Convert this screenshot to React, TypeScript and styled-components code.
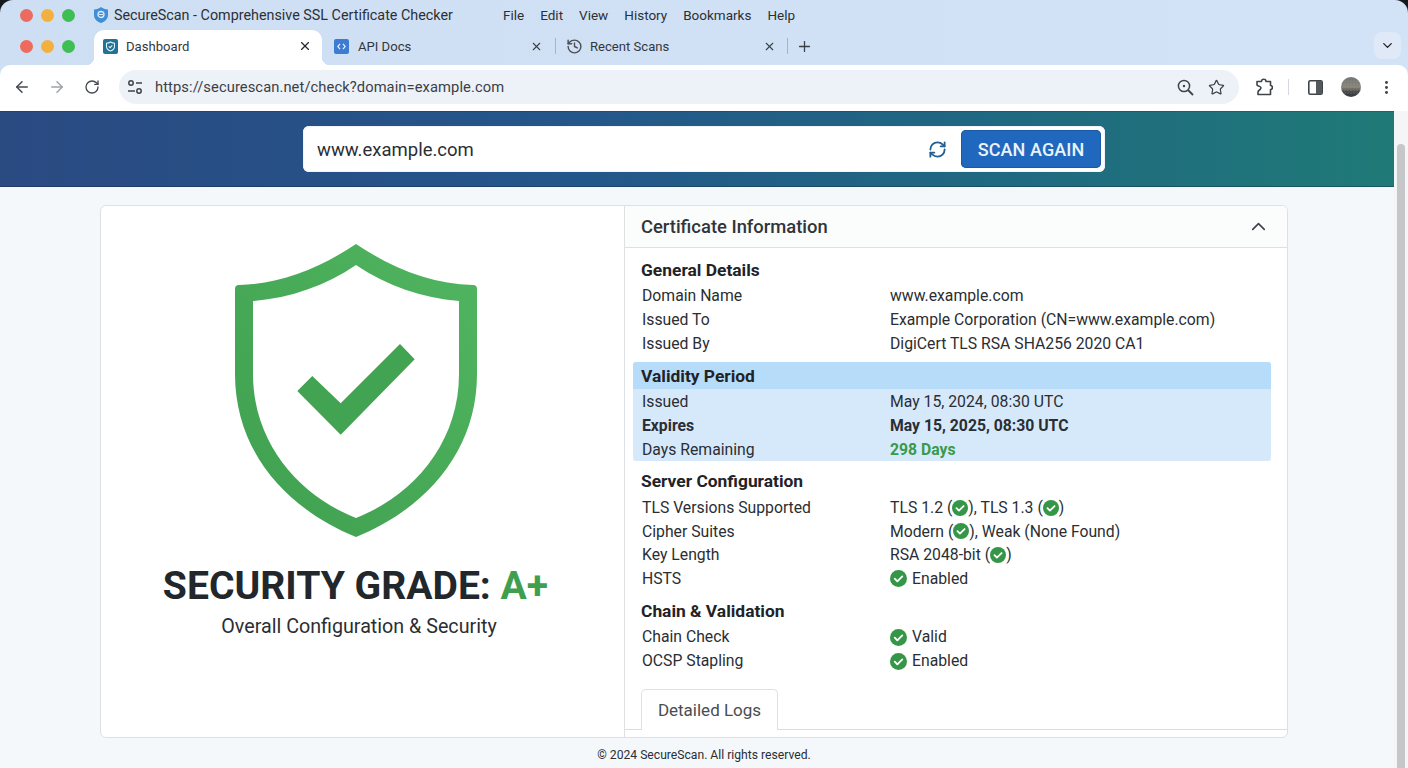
import React from 'react';
import styled, { createGlobalStyle } from 'styled-components';
import { ArrowLeft, ArrowRight, RotateCw, Star, MoreVertical, ChevronDown, ChevronUp, X, Plus, History, RefreshCw } from 'lucide-react';

const Global = createGlobalStyle`
  html, body { margin: 0; padding: 0; background: #15181c; }
  body { font-family: Roboto, "Liberation Sans", sans-serif; color: #22262a; overflow: hidden; }
  * { box-sizing: border-box; }
`;

const Window = styled.div`
  width: 1408px; height: 768px; display: flex; flex-direction: column; overflow: hidden;
  border-radius: 13px 13px 0 0; background: linear-gradient(90deg, #cfdff3, #d3e3f7);
`;
const TitleBar = styled.div`height: 30px; display: flex; align-items: center; padding-left: 20px; flex: none;`;
const Lights = styled.div`display: flex; align-items: center; gap: 8px; width: 74px; flex: none;`;
const TabLights = styled(Lights)`padding-bottom: 3px;`;
const Light = styled.span<{ $c: string }>`width: 13px; height: 13px; border-radius: 50%; background: ${p => p.$c};`;
const TitleText = styled.div`font-size: 14.33px; color: #2b3036; margin-left: 6px; width: 389px; white-space: nowrap;`;
const Menu = styled.div`display: flex; gap: 16px; font-size: 13.5px; color: #2b3036;`;

const TabStrip = styled.div`height: 35px; display: flex; align-items: stretch; padding-left: 20px; flex: none;`;
const Tab = styled.div<{ $active?: boolean; $w: number; $pl?: number; $pr?: number; $gap?: number }>`
  position: relative; width: ${p => p.$w}px; display: flex; align-items: center; gap: ${p => p.$gap ?? 8}px;
  padding: 0 ${p => p.$pr ?? 9}px 3px ${p => p.$pl ?? 9}px;
  font-size: 13.1px; color: #32373d; border-radius: 10px 10px 0 0; flex: none;
  background: ${p => (p.$active ? '#fff' : 'transparent')};
  ${p => p.$active ? `
    &::before, &::after { content: ''; position: absolute; bottom: 0; width: 8px; height: 8px; }
    &::before { left: -8px; background: radial-gradient(circle at 0 0, transparent 8px, #fff 8.5px); }
    &::after { right: -8px; background: radial-gradient(circle at 100% 0, transparent 8px, #fff 8.5px); }
  ` : ''}
`;
const TabLabel = styled.span`flex: 1; white-space: nowrap;`;
const Sep = styled.div`width: 1px; height: 16px; margin-bottom: 3px; background: #a9b4c2; align-self: center; flex: none;`;
const PlusBtn = styled.div`display: flex; align-items: center; margin: 0 0 3px 8px; color: #3a3f45;`;
const Spacer = styled.div`flex: 1;`;
const DropBtn = styled.div`
  width: 27px; height: 27px; margin: 2px 7px 0 0; border-radius: 8px; background: #dfe9f8;
  display: flex; align-items: center; justify-content: center; color: #23272b;
`;

const Toolbar = styled.div`
  height: 46px; background: #fff; border-radius: 10px 10px 0 0; display: flex; align-items: center; flex: none;
  padding: 0 12px 2px 12px; color: #454a50;
`;
const NavBtn = styled.div<{ $faded?: boolean }>`
  width: 20px; height: 20px; margin-right: 15px; display: flex; align-items: center; justify-content: center;
  color: ${p => (p.$faded ? '#9ea3a8' : '#454a50')};
`;
const Omni = styled.div`
  width: 1120px; height: 34px; margin-left: 2px; border-radius: 17px; background: #edf1f8; display: flex; align-items: center;
  padding: 0 14px 0 8px; gap: 12px; font-size: 14.72px; color: #3a3f45;
`;
const UrlText = styled.span`flex: 1; letter-spacing: 0.08px; white-space: nowrap;`;
const OmniIcons = styled.div`display: flex; gap: 14px; align-items: center;`;
const ToolRight = styled.div`display: flex; align-items: center; margin-left: 17px; color: #3f4449;`;
const ToolSep = styled.div`width: 1px; height: 16px; background: #d5d8dc; margin: 0 19px 0 15px;`;

const Page = styled.div`flex: 1; display: flex; min-height: 0; background: #f4f8fa;`;
const Content = styled.div`width: 1394px; flex: none; display: flex; flex-direction: column;`;
const ScrollTrack = styled.div`width: 14px; flex: none; background: #f3f5f6; padding: 33px 3px 0; display: flex;`;
const ScrollThumb = styled.div`flex: 1; background: #c6c7c8; border-radius: 4px 4px 0 0;`;

const Hero = styled.div`
  height: 76px; flex: none; display: flex; align-items: center; padding-left: 303px;
  background: linear-gradient(90deg, #2a4a82 0%, #24568a 40%, #1f6b80 75%, #1f7a77 100%);
  box-shadow: inset 0 -1px 0 rgba(10, 30, 50, 0.35), inset 0 1px 0 rgba(10, 30, 50, 0.2);
`;
const SearchBox = styled.div`
  width: 802px; height: 46px; background: #fff; border-radius: 6px; display: flex; align-items: center;
  padding: 0 4px 0 14px; box-shadow: inset 0 0 0 1px #f0f4f8;
`;
const SearchText = styled.div`flex: 1; font-size: 18.5px; color: #2a2e33; padding-top: 1px;`;
const RefreshWrap = styled.div`display: flex; color: #215f92; margin-right: 14px;`;
const ScanBtn = styled.div`
  width: 140px; height: 38px; background: #1f68bd; border-radius: 5px; color: #eaf2fb; font-size: 18px; font-weight: 500;
  letter-spacing: 0.1px; display: flex; align-items: center; justify-content: center;
  box-shadow: inset 0 0 0 1px #1a5aa5;
`;

const Card = styled.div`
  width: 1188px; height: 533px; margin: 18px 0 0 100px; display: flex; background: #fff;
  border: 1px solid #dde1e4; border-radius: 6px; overflow: hidden; flex: none;
`;
const GradePanel = styled.div`
  width: 524px; flex: none; border-right: 1px solid #dde1e4; display: flex; flex-direction: column; align-items: center;
  padding: 38px 14px 0 0;
`;
const ShieldSvg = styled.svg`width: 242px; height: 293px; display: block;`;
const Grade = styled.div`font-size: 39.1px; font-weight: 700; color: #22272b; margin-top: 26px; line-height: 46px; white-space: nowrap;`;
const GradeA = styled.span`color: #3f9f4f;`;
const GradeSub = styled.div`font-size: 19.7px; color: #2a2e33; margin: 3px 0 0 7px; line-height: 30px; white-space: nowrap;`;

const InfoPanel = styled.div`flex: 1; display: flex; flex-direction: column; min-width: 0;`;
const InfoHead = styled.div`
  height: 42px; border-bottom: 1px solid #dde1e4; display: flex; align-items: center; justify-content: space-between;
  padding: 0 17px 0 16px; font-size: 18.4px; font-weight: 500; color: #30353a; background: #fbfcfc; flex: none;
`;
const InfoBody = styled.div`flex: 1; padding: 8px 16px 0 8px; display: flex; flex-direction: column;`;
const Section = styled.div<{ $mt?: number }>`margin-top: ${p => p.$mt ?? 0}px;`;
const SectionTitle = styled.div`height: 28.4px; line-height: 28px; padding-left: 8px; font-size: 17.4px; font-weight: 700; color: #1f2327;`;
const Validity = styled.div`margin-top: 6.5px; background: #d6e9fb; border-radius: 3px; overflow: hidden; height: 99px;`;
const ValidityTitle = styled(SectionTitle)`height: 27.5px; line-height: 28px; background: #b6dcfa; margin-bottom: 0.7px;`;
const Row = styled.div<{ $bold?: boolean }>`
  display: grid; grid-template-columns: 248px 1fr; height: 23.7px; line-height: 23.7px; padding-left: 9px; font-size: 15.75px;
  color: #2a2e33; font-weight: ${p => (p.$bold ? 700 : 400)}; white-space: nowrap;
`;
const Value = styled.div<{ $green?: boolean }>`
  display: flex; align-items: center;
  ${p => p.$green ? 'color: #3a9a4a; font-weight: 700;' : ''}
`;
const CheckGap = styled.span`display: inline-block; width: 5px;`;
const TabBar = styled.div`
  margin: 16px -16px 0 -8px; height: 41px; border-bottom: 1px solid #d9dde0; padding-left: 16px; flex: none; display: flex;
`;
const LogTab = styled.div`
  width: 137px; height: 41px; border: 1px solid #dde1e4; border-bottom: none; border-radius: 5px 5px 0 0; background: #fff;
  font-size: 17px; color: #484d52; display: flex; align-items: center; justify-content: center;
`;
const Footer = styled.div`flex: 1; display: flex; align-items: center; justify-content: center; font-size: 12.15px; color: #2a2e33; padding: 4px 0 0 14px;`;

const Check = ({ s = 16 }: { s?: number }) => (
  <svg width={s} height={s} viewBox="0 0 18 18" style={{ flex: 'none' }}>
    <circle cx="9" cy="9" r="9" fill="#359648" />
    <path d="M5 9.2l2.8 2.8L13 6.8" fill="none" stroke="#fff" strokeWidth="2" strokeLinecap="round" strokeLinejoin="round" />
  </svg>
);

const Shield = () => (
  <ShieldSvg viewBox="0 0 242 293">
    <defs>
      <linearGradient id="g" x1="1" y1="0" x2="0" y2="1">
        <stop offset="0" stopColor="#50b560" />
        <stop offset="1" stopColor="#3f9f4f" />
      </linearGradient>
    </defs>
    <path
      fillRule="evenodd"
      fill="url(#g)"
      d="M121 0C160 26 198 40 238 41Q242 41 242 45L242 130C242 208 190 265 121 293C52 265 0 208 0 130L0 45Q0 41 4 41C44 40 82 26 121 0ZM121 21C90 42 55 54 18 57L18 130C18 200 65 252 121 274C177 252 224 200 224 130L224 57C187 54 152 42 121 21Z"
    />
    <polygon fill="#42a352" points="62.3,147 77.3,132 105.7,159.3 165,100 179.7,115.3 105.7,190.7" />
  </ShieldSvg>
);

const MiniShield = () => (
  <svg width="14" height="16" viewBox="0 0 14 16" style={{ flex: 'none' }}>
    <path d="M7 0C9 1.4 11 2.2 14 2.4V8C14 12 11 14.6 7 16C3 14.6 0 12 0 8V2.4C3 2.2 5 1.4 7 0Z" fill="#3f8fd8" />
    <circle cx="7" cy="7.5" r="3" fill="none" stroke="#dbeaf8" strokeWidth="1.3" />
    <path d="M5 7.5h4" stroke="#dbeaf8" strokeWidth="1.1" />
  </svg>
);
const DashIcon = () => (
  <svg width="15" height="15" viewBox="0 0 15 15" style={{ flex: 'none' }}>
    <rect width="15" height="15" rx="2" fill="#1f7396" />
    <path d="M7.5 3C9 3.8 10 4.1 11.5 4.2V7.5C11.5 9.8 9.8 11.2 7.5 12C5.2 11.2 3.5 9.8 3.5 7.5V4.2C5 4.1 6 3.8 7.5 3Z" fill="none" stroke="#e4f1f6" strokeWidth="1.1" />
    <path d="M5.8 7.4l1.3 1.3 2.2-2.3" fill="none" stroke="#e4f1f6" strokeWidth="1.1" />
  </svg>
);
const ApiIcon = () => (
  <svg width="15" height="15" viewBox="0 0 15 15" style={{ flex: 'none' }}>
    <rect width="15" height="15" rx="2" fill="#3d7cd0" />
    <path d="M6 4.8L3.8 7.5L6 10.2M9 4.8L11.2 7.5L9 10.2" fill="none" stroke="#e8f0fb" strokeWidth="1.2" />
  </svg>
);
const TuneIcon = () => (
  <svg width="16" height="16" viewBox="0 0 16 16" fill="none" stroke="#3f4449" strokeWidth="1.5" style={{ flex: 'none' }}>
    <circle cx="4" cy="4" r="2.2" />
    <path d="M9 4h6M1 12h7" />
    <circle cx="12" cy="12" r="2.2" />
  </svg>
);
const ZoomIcon = () => (
  <svg width="17" height="17" viewBox="0 0 17 17" fill="none" stroke="#3f4449" strokeWidth="1.5">
    <circle cx="7" cy="7" r="5.6" />
    <circle cx="7" cy="7" r="1.2" fill="#3f4449" stroke="none" />
    <path d="M11 11l5 5" strokeWidth="1.8" />
  </svg>
);
const PuzzleIcon = () => (
  <svg width="17" height="18" viewBox="0 0 17 18" fill="none" stroke="#3f4449" strokeWidth="1.6" strokeLinejoin="round">
    <path d="M1 3.5h4.5C5.5 0.5 10 0.5 10 3.5h4.5V7.5C17 7.5 17 11.5 14.5 11.5V16.5H2V14C2 12 5 12 5 9.8C5 8 1 8 1 7Z" />
  </svg>
);
const PanelIcon = () => (
  <svg width="15" height="15" viewBox="0 0 15 15">
    <rect x="0.8" y="0.8" width="13.4" height="13.4" rx="1.5" fill="none" stroke="#3f4449" strokeWidth="1.6" />
    <rect x="8" y="1" width="6" height="13" fill="#54585c" />
  </svg>
);
const AvatarSvg = () => (
  <svg width="20" height="20" viewBox="0 0 20 20" style={{ margin: '0 17px 0 18px', flex: 'none' }}>
    <defs>
      <linearGradient id="av" x1="0" y1="0" x2="0" y2="1">
        <stop offset="0" stopColor="#6f7275" />
        <stop offset="0.5" stopColor="#8c867a" />
        <stop offset="0.72" stopColor="#4b4d4f" />
        <stop offset="1" stopColor="#2c2e30" />
      </linearGradient>
      <pattern id="sp" width="3" height="3" patternUnits="userSpaceOnUse">
        <circle cx="1" cy="1" r="0.6" fill="#a9a69c" opacity="0.55" />
      </pattern>
    </defs>
    <circle cx="10" cy="10" r="10" fill="url(#av)" />
    <circle cx="10" cy="10" r="10" fill="url(#sp)" />
  </svg>
);

const rows1 = [
  ['Domain Name', 'www.example.com'],
  ['Issued To', 'Example Corporation (CN=www.example.com)'],
  ['Issued By', 'DigiCert TLS RSA SHA256 2020 CA1'],
];

export default function App() {
  return (
    <>
      <Global />
      <Window>
        <TitleBar>
          <Lights>
            <Light $c="#ec6a5e" />
            <Light $c="#f4b03f" />
            <Light $c="#3fbe55" />
          </Lights>
          <MiniShield />
          <TitleText>SecureScan - Comprehensive SSL Certificate Checker</TitleText>
          <Menu>
            <span>File</span><span>Edit</span><span>View</span><span>History</span><span>Bookmarks</span><span>Help</span>
          </Menu>
        </TitleBar>
        <TabStrip>
          <TabLights>
            <Light $c="#ec6a5e" />
            <Light $c="#f4b03f" />
            <Light $c="#3fbe55" />
          </TabLights>
          <Tab $active $w={228} $pr={10}>
            <DashIcon />
            <TabLabel>Dashboard</TabLabel>
            <X size={14} color="#26292d" strokeWidth={2} />
          </Tab>
          <Tab $w={233} $pl={12} $pr={12} $gap={9}>
            <ApiIcon />
            <TabLabel>API Docs</TabLabel>
            <X size={13} color="#3a3f45" strokeWidth={2} />
          </Tab>
          <Sep />
          <Tab $w={231} $pl={10} $pr={11} $gap={7}>
            <History size={17} color="#4a4f55" />
            <TabLabel>Recent Scans</TabLabel>
            <X size={13} color="#3a3f45" strokeWidth={2} />
          </Tab>
          <Sep />
          <PlusBtn><Plus size={17} strokeWidth={1.8} /></PlusBtn>
          <Spacer />
          <DropBtn><ChevronDown size={15} strokeWidth={2.2} /></DropBtn>
        </TabStrip>
        <Toolbar>
          <NavBtn><ArrowLeft size={18} /></NavBtn>
          <NavBtn $faded><ArrowRight size={18} /></NavBtn>
          <NavBtn><RotateCw size={16} strokeWidth={2} /></NavBtn>
          <Omni>
            <TuneIcon />
            <UrlText>https://securescan.net/check?domain=example.com</UrlText>
            <OmniIcons>
              <ZoomIcon />
              <Star size={17} strokeWidth={1.7} />
            </OmniIcons>
          </Omni>
          <ToolRight>
            <PuzzleIcon />
            <ToolSep />
            <PanelIcon />
            <AvatarSvg />
            <MoreVertical size={17} strokeWidth={2.2} />
          </ToolRight>
        </Toolbar>
        <Page>
          <Content>
            <Hero>
              <SearchBox>
                <SearchText>www.example.com</SearchText>
                <RefreshWrap><RefreshCw size={19} strokeWidth={2.3} /></RefreshWrap>
                <ScanBtn>SCAN AGAIN</ScanBtn>
              </SearchBox>
            </Hero>
            <Card>
              <GradePanel>
                <Shield />
                <Grade>SECURITY GRADE: <GradeA>A+</GradeA></Grade>
                <GradeSub>Overall Configuration &amp; Security</GradeSub>
              </GradePanel>
              <InfoPanel>
                <InfoHead>
                  Certificate Information
                  <ChevronUp size={23} color="#3f4449" strokeWidth={1.7} />
                </InfoHead>
                <InfoBody>
                  <Section>
                    <SectionTitle>General Details</SectionTitle>
                    {rows1.map(r => (
                      <Row key={r[0]}><div>{r[0]}</div><Value>{r[1]}</Value></Row>
                    ))}
                  </Section>
                  <Validity>
                    <ValidityTitle>Validity Period</ValidityTitle>
                    <Row><div>Issued</div><Value>May 15, 2024, 08:30 UTC</Value></Row>
                    <Row $bold><div>Expires</div><Value>May 15, 2025, 08:30 UTC</Value></Row>
                    <Row><div>Days Remaining</div><Value $green>298 Days</Value></Row>
                  </Validity>
                  <Section $mt={6.5}>
                    <SectionTitle>Server Configuration</SectionTitle>
                    <Row><div>TLS Versions Supported</div><Value>TLS 1.2 (<Check />), TLS 1.3 (<Check />)</Value></Row>
                    <Row><div>Cipher Suites</div><Value>Modern (<Check />), Weak (None Found)</Value></Row>
                    <Row><div>Key Length</div><Value>RSA 2048-bit (<Check />)</Value></Row>
                    <Row><div>HSTS</div><Value><Check s={17} /><CheckGap />Enabled</Value></Row>
                  </Section>
                  <Section $mt={6.5}>
                    <SectionTitle>Chain &amp; Validation</SectionTitle>
                    <Row><div>Chain Check</div><Value><Check s={17} /><CheckGap />Valid</Value></Row>
                    <Row><div>OCSP Stapling</div><Value><Check s={17} /><CheckGap />Enabled</Value></Row>
                  </Section>
                  <TabBar>
                    <LogTab>Detailed Logs</LogTab>
                  </TabBar>
                </InfoBody>
              </InfoPanel>
            </Card>
            <Footer>© 2024 SecureScan. All rights reserved.</Footer>
          </Content>
          <ScrollTrack><ScrollThumb /></ScrollTrack>
        </Page>
      </Window>
    </>
  );
}
